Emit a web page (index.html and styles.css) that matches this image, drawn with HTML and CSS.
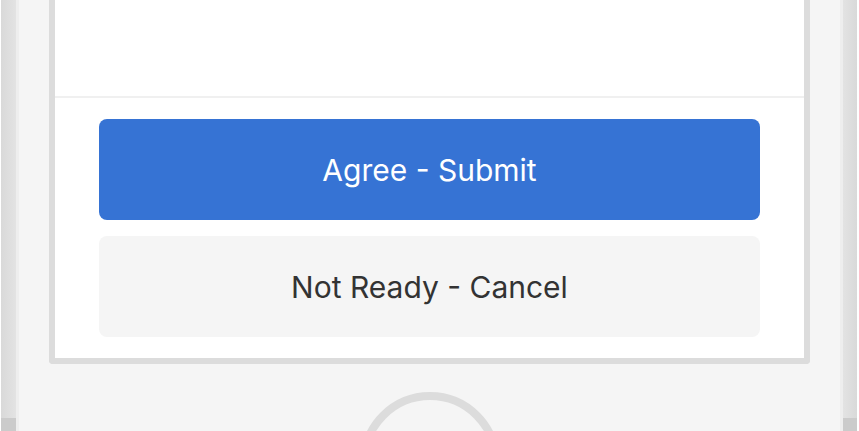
FILE: index.html
```
<html>
<head>
  <title>Confirm</title>
  <link rel="stylesheet" href="styles.css">
</head>
<body>
  <div class="phone">
    <div class="rail"><div class="rail-btn"></div></div>
    <div class="edge"></div>
    <div class="bezel">
      <div class="screen">
        <div class="screen-top"></div>
        <div class="actions">
          <button class="btn btn-primary">Agree - Submit</button>
          <button class="btn btn-secondary">Not Ready - Cancel</button>
        </div>
      </div>
      <div class="home"></div>
    </div>
    <div class="edge"></div>
    <div class="rail rail-right"><div class="rail-btn"></div></div>
  </div>
</body>
</html>
```

FILE: styles.css
```
html, body {
  margin: 0;
  height: 431px;
  overflow: hidden;
  background: #fff;
  font-family: Inter, 'Noto Sans', sans-serif;
}
.phone {
  display: flex;
  height: 431px;
  margin: 0 2px 0 1px;
  overflow: hidden;
}
.rail {
  width: 15px;
  background: linear-gradient(to right, #d9d9d9, #e3e3e3);
  display: flex;
  flex-direction: column;
  justify-content: flex-end;
}
.rail-right {
  width: 14px;
  background: linear-gradient(to right, #e3e3e3, #d9d9d9);
}
.rail-btn {
  height: 13px;
  background: #cbcbcb;
}
.edge {
  width: 3px;
  background: #eeeeee;
}
.bezel {
  flex: 1;
  min-height: 0;
  overflow: hidden;
  background: #f5f5f5;
  padding: 0 30px;
  display: flex;
  flex-direction: column;
  align-items: center;
}
.screen {
  align-self: stretch;
  flex-shrink: 0;
  background: #fff;
  border: 6px solid #dcdcdc;
  border-top: none;
  border-radius: 0 0 4px 4px;
}
.screen-top {
  height: 96px;
  border-bottom: 2px solid #f0f0f0;
}
.actions {
  display: flex;
  flex-direction: column;
  gap: 16px;
  padding: 21px 44px;
}
.btn {
  height: 101px;
  border: none;
  border-radius: 8px;
  font-family: Inter, 'Noto Sans', sans-serif;
  font-size: 30px;
  cursor: pointer;
}
.btn-primary {
  background: #3673d4;
  color: #fff;
}
.btn-secondary {
  background: #f5f5f5;
  color: #333;
}
.home {
  flex-shrink: 0;
  margin-top: 28px;
  width: 124px;
  height: 124px;
  border: 8px solid #dcdcdc;
  border-radius: 50%;
  background: #f5f5f5;
}
```
